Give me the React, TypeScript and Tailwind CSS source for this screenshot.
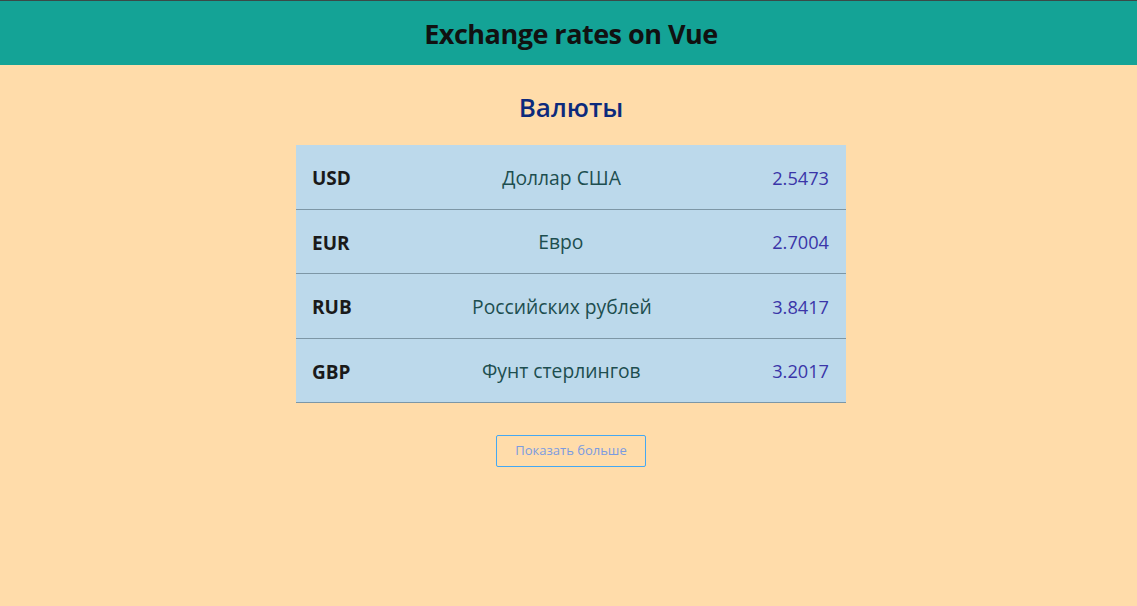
const rates = [
  { code: "USD", name: "Доллар США", value: "2.5473" },
  { code: "EUR", name: "Евро", value: "2.7004" },
  { code: "RUB", name: "Российских рублей", value: "3.8417" },
  { code: "GBP", name: "Фунт стерлингов", value: "3.2017" },
];

export default function App() {
  return (
    <div
      className="min-h-[606px] bg-[#ffdcaa] flex flex-col"
      style={{ fontFamily: '"Open Sans", "Noto Sans", sans-serif' }}
    >
      <header className="h-[65px] bg-[#14a396] border-t border-[#3a4a48] flex items-center justify-center pt-[2px] pl-[5px]">
        <h1 className="text-[27px] font-bold text-[#111] tracking-[-0.5px]">
          Exchange rates on Vue
        </h1>
      </header>

      <main className="flex flex-col items-center pl-[5px]">
        <h2 className="mt-[24px] text-[26px] font-semibold text-[#0c2a7c] leading-[36px]">
          Валюты
        </h2>

        <div className="mt-[20px] w-[550px] bg-[#bcd9eb]">
          {rates.map((rate) => (
            <div
              key={rate.code}
              className="h-[64.5px] flex items-center pl-4 pr-[17px] pt-[3px] border-b border-[#7d97a6]"
            >
              <span className="font-bold text-[19px] text-[#1a1a1a]">{rate.code}</span>
              <span className="flex-1 text-center text-[19.3px] text-[#1d4e4f]">{rate.name}</span>
              <span className="text-[18.2px] text-[#3a35a8]">{rate.value}</span>
            </div>
          ))}
        </div>

        <button className="mt-[32px] w-[150px] h-[32px] border border-[#45a8f2] rounded-[2px] text-[13px] text-[#7a9be0]">
          Показать больше
        </button>
      </main>
    </div>
  );
}
